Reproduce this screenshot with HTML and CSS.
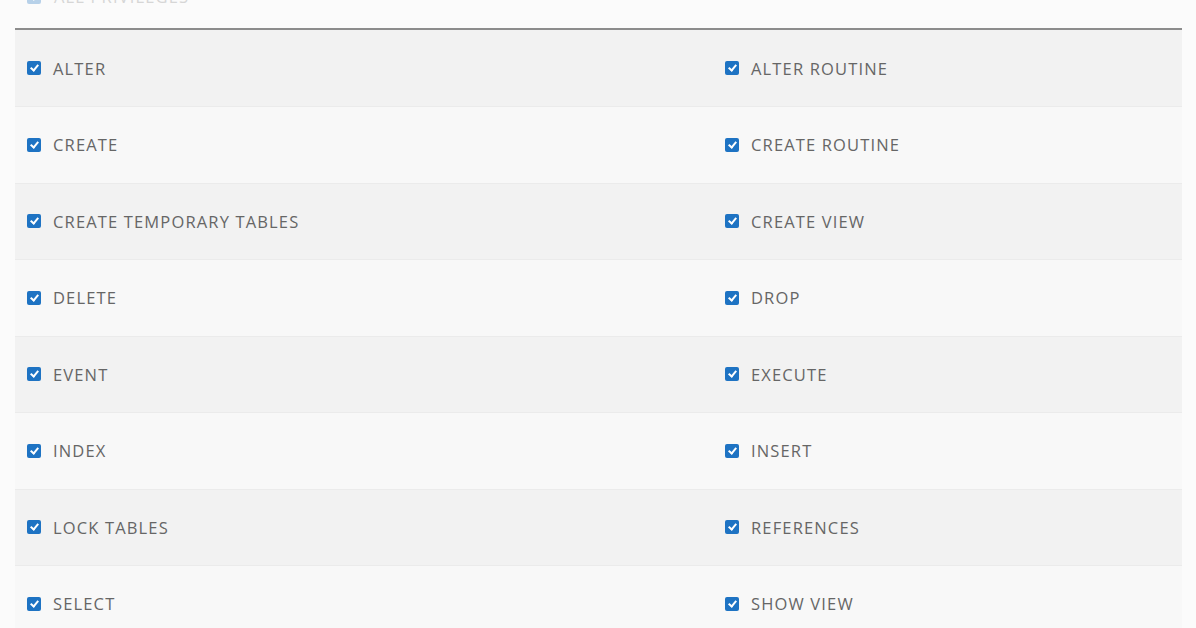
FILE: index.html
```html
<!DOCTYPE html>
<html lang="en">
<head>
  <meta charset="UTF-8" />
  <title>Privileges</title>
  <link rel="stylesheet" href="styles.css">
</head>
<body>

<div class="privileges">
  <!-- All privileges toggle -->
  <div class="all-row">
    <label><span class="check"></span>ALL PRIVILEGES</label>
  </div>

  <table class="priv-table">
    <tr>
      <td><label><span class="check"></span>ALTER</label></td>
      <td><label><span class="check"></span>ALTER ROUTINE</label></td>
    </tr>
    <tr>
      <td><label><span class="check"></span>CREATE</label></td>
      <td><label><span class="check"></span>CREATE ROUTINE</label></td>
    </tr>
    <tr>
      <td><label><span class="check"></span>CREATE TEMPORARY TABLES</label></td>
      <td><label><span class="check"></span>CREATE VIEW</label></td>
    </tr>
    <tr>
      <td><label><span class="check"></span>DELETE</label></td>
      <td><label><span class="check"></span>DROP</label></td>
    </tr>
    <tr>
      <td><label><span class="check"></span>EVENT</label></td>
      <td><label><span class="check"></span>EXECUTE</label></td>
    </tr>
    <tr>
      <td><label><span class="check"></span>INDEX</label></td>
      <td><label><span class="check"></span>INSERT</label></td>
    </tr>
    <tr>
      <td><label><span class="check"></span>LOCK TABLES</label></td>
      <td><label><span class="check"></span>REFERENCES</label></td>
    </tr>
    <tr>
      <td><label><span class="check"></span>SELECT</label></td>
      <td><label><span class="check"></span>SHOW VIEW</label></td>
    </tr>
  </table>
</div>

</body>
</html>
```

FILE: styles.css
```css
body {
  margin: 0;
  background-color: #fbfbfb;
  font-family: 'Open Sans', 'Liberation Sans', sans-serif;
  color: #666;
  overflow: hidden;
}

.privileges {
  margin: -12px 14px 0 15px;
}

.all-row {
  height: 42px;
  padding-left: 12px;
  border-bottom: 2px solid #8c8c8c;
  box-sizing: border-box;
}

.all-row label {
  display: flex;
  align-items: center;
  gap: 13px;
  font-size: 16.5px;
  letter-spacing: 1.15px;
  color: #d6d6d6;
  position: relative;
  top: -3px;
}

.all-row .check {
  opacity: 0.3;
}

.priv-table {
  width: 100%;
  border-collapse: collapse;
}

.priv-table tr {
  height: 76.5px;
  border-bottom: 1px solid #ebebeb;
}

.priv-table tr:nth-child(odd) {
  background-color: #f2f2f2;
}

.priv-table tr:nth-child(even) {
  background-color: #f8f8f8;
}

.priv-table td {
  padding: 0 12px;
}

.priv-table td:first-child {
  width: 674px;
}

.priv-table label {
  display: flex;
  align-items: center;
  gap: 12px;
  font-size: 16.5px;
  letter-spacing: 1.15px;
}

/* checked box */
.check {
  width: 14px;
  height: 14px;
  border-radius: 2px;
  background-color: #1e73c3;
  position: relative;
  flex-shrink: 0;
}

.check::after {
  content: "";
  position: absolute;
  left: 4.5px;
  top: 2px;
  width: 3px;
  height: 6px;
  border: solid #fff;
  border-width: 0 2px 2px 0;
  transform: rotate(40deg);
}
```
